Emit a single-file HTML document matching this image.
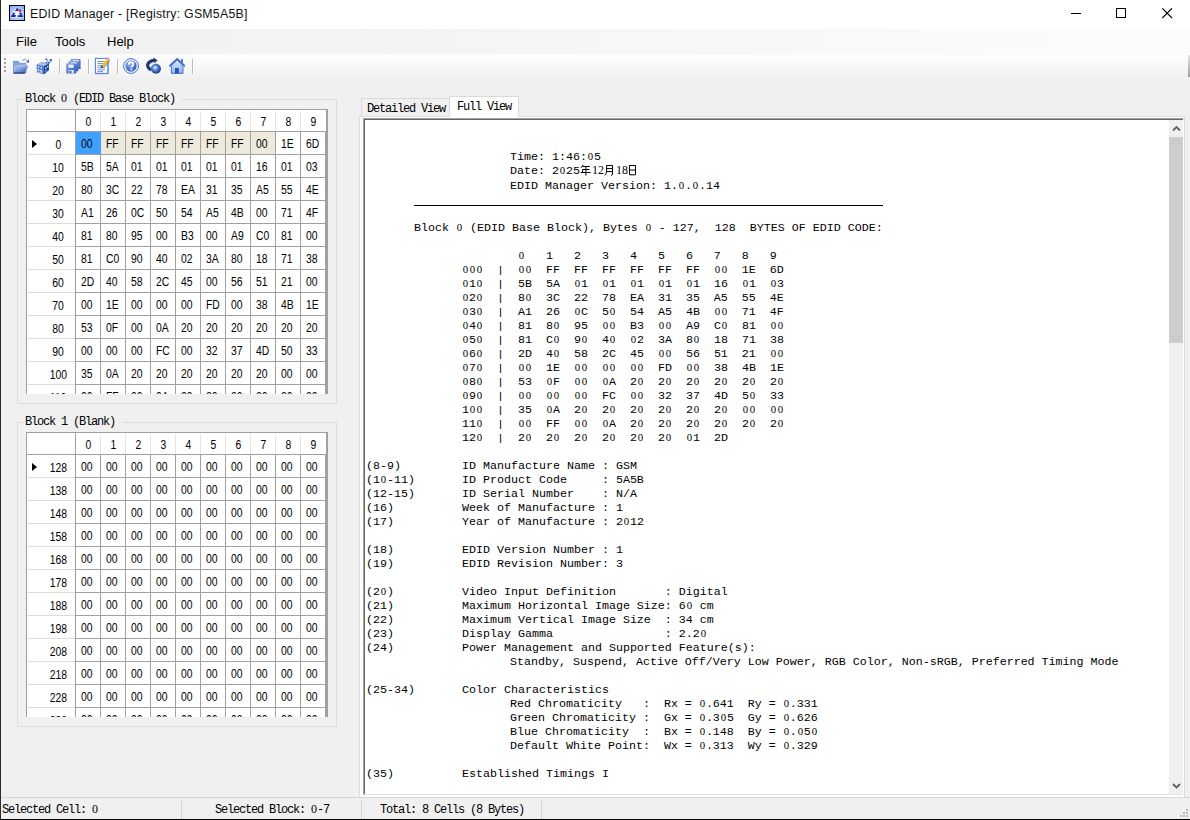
<!DOCTYPE html>
<html><head><meta charset="utf-8"><title>EDID Manager</title>
<style>
*{box-sizing:border-box;margin:0;padding:0}
html,body{width:1190px;height:820px;overflow:hidden;background:#f0f0f0;font-family:"Liberation Sans",sans-serif;color:#000}
#w{position:absolute;left:0;top:0;width:1190px;height:820px;overflow:hidden;background:#f0f0f0}
#w>*,.abs{position:absolute}
#title{left:0;top:0;width:1190px;height:29px;background:#fff}
#title .t{position:absolute;left:30px;top:6px;font-size:12.3px;letter-spacing:.25px;color:#111;line-height:16px;white-space:nowrap}
#menu{left:0;top:29px;width:1190px;height:25px;background:linear-gradient(90deg,#f0f0f0,#fcfcfc)}
#menu span{position:absolute;top:5px;font-size:13px;line-height:16px}
#tool{left:0;top:54px;width:1190px;height:25px;background:linear-gradient(180deg,#fdfdfd 0%,#f9f9f9 40%,#f0f0f0 100%)}
#tool .sep{position:absolute;top:5px;width:1px;height:15px;background:#bdbdbd}
#tool .sep:after{content:"";position:absolute;left:1px;top:1px;width:1px;height:15px;background:#fff}
#tool svg{position:absolute}
.gp{position:absolute;left:4px;width:2px;height:2px;background:#a0a0a0;box-shadow:1px 1px 0 #fff}
.ovf{position:absolute;left:1188px;top:1px;width:2px;height:22px;background:linear-gradient(#e8e8e8,#9a9a9a)}
.lb{position:absolute;left:0;top:0;width:1px;height:820px;background:#2b2b2b}
.bb{position:absolute;left:0;top:819px;width:1190px;height:1px;background:#000}
.gb{border:1px solid #dcdcdc}
.gbl{font-family:"Liberation Mono",monospace;font-size:12px;letter-spacing:-1.2px;line-height:14px;background:#f0f0f0;padding:0 2px 0 1px;white-space:nowrap}
.z{font-family:"Liberation Serif",serif;font-style:normal;letter-spacing:0;line-height:0}
.sim{font-family:"Liberation Mono",monospace;font-size:12px;letter-spacing:-1.2px;white-space:nowrap}
.grid{position:absolute;left:26px;width:302px;height:285px;overflow:hidden;background:#fff}
.gt{left:0;top:0;width:302px;height:1px;background:#a0a0a0}
.gl{left:0;top:0;width:1px;height:400px;background:#a0a0a0}
.grid>*{position:absolute}
.grid{font-size:12.5px}
.hd{top:2px;width:1px;height:20px;background:#e5e5e5}
.vl{width:1px;height:400px;background:#a0a0a0}
.hl{left:49px;width:252px;height:1px;background:#a0a0a0}
.rl{left:0;width:49px;height:1px;background:#dcdcdc}
.gr{left:300px;top:0;width:2px;height:400px;background:#a0a0a0}
.c{width:24px;height:22px;line-height:25px;text-align:center;font-weight:normal}
.c span,.rh span{display:inline-block;transform:scaleX(.83)}
.d{text-align:left;padding-left:4.5px}
.d span{transform-origin:left center}
.rh{left:14.5px;width:35px;height:22px;line-height:27px;text-align:center;font-weight:normal}
.sel{background:#40a0ff;width:25px!important}
.hi{background:#eeeadb}
.arrow{left:6px;width:0;height:0;border-left:5px solid #000;border-top:4.5px solid transparent;border-bottom:4.5px solid transparent}
.tab{border:1px solid #d9d9d9;border-bottom:none}
#panel{left:359px;top:116px;width:826px;height:682px;background:#fff;border:1px solid #dcdcdc}
#txt{left:363px;top:118px;width:821px;height:677px;background:#fff;border-left:1px solid #a0a0a0;border-top:1px solid #a0a0a0;border-bottom:1px solid #e3e3e3;border-right:1px solid #fff}
#txt .in{position:absolute;left:0;top:0;right:0;bottom:0;border-left:1px solid #696969;border-top:1px solid #696969;overflow:hidden}
#txtc{position:absolute;left:1px;top:2px;font-family:"Liberation Mono",monospace;font-size:11.667px;line-height:14px;white-space:pre}
.ln{position:absolute;white-space:pre}
.ln i{font-family:"Liberation Serif",serif;font-style:normal;font-size:10.8px;line-height:0;letter-spacing:1.6px;position:relative;left:.8px}
.cj{display:inline-block;width:12px;height:12px;vertical-align:-2px;fill:none;stroke:#000;stroke-width:1}
.ln b{font-weight:normal;display:inline-block;transform:scaleY(.76);transform-origin:50% 62%}
.ln u{text-decoration:none;font-family:"Liberation Serif",serif;font-size:12px;line-height:0}
#sb{left:1169px;top:120px;width:14px;height:674px;background:#f0f0f0}
#sb .th{position:absolute;left:0;top:17px;width:14px;height:206px;background:#cdcdcd}
#status .sp{position:absolute;top:2px;width:1px;height:19px;background:#d7d7d7}
#status{left:0;top:797px;width:1190px;height:22px;border-top:1px solid #d7d7d7;background:#f0f0f0}
#status span{position:absolute;top:5px;line-height:14px}
</style></head><body>
<div id="w">
<div id="title">
<svg class="abs" style="left:9px;top:5px" width="16" height="16" viewBox="0 0 16 16"><defs><radialGradient id="ig" cx="50%" cy="55%" r="60%"><stop offset="0" stop-color="#e8f1ff"/><stop offset="1" stop-color="#7fb0ff"/></radialGradient></defs><rect x=".5" y=".5" width="15" height="15" fill="url(#ig)" stroke="#000"/><path d="M8.1 2.2L1.4 12.4H14.8Z" fill="#fff" opacity=".75"/><path d="M8.1 2.6L6 6.3L9 6.1L9.9 4.9ZM1.8 11.9L4.3 7.7L6.5 8.3L4.9 9.8L7.2 10.2L6.2 11.9ZM14.2 11.9L11.7 7.1L10 8.5L11.5 10L8.4 10.6L8.8 11.9Z" fill="#27298c"/><circle cx="10.9" cy="5.7" r="1.35" fill="#f21a1a"/></svg>
<div class="t">EDID Manager - [Registry: GSM5A5B]</div>
<svg class="abs" style="left:1071px;top:8px" width="11" height="11" viewBox="0 0 11 11"><path d="M0 5.5H10" stroke="#000" stroke-width="1"/></svg>
<svg class="abs" style="left:1116px;top:8px" width="11" height="11" viewBox="0 0 11 11"><rect x=".5" y=".5" width="9" height="9" fill="none" stroke="#000" stroke-width="1"/></svg>
<svg class="abs" style="left:1162px;top:8px" width="11" height="11" viewBox="0 0 11 11"><path d="M.3 .3L10 10M10 .3L.3 10" stroke="#000" stroke-width="1.1"/></svg>
</div>
<div id="menu"><span style="left:16px">File</span><span style="left:55px">Tools</span><span style="left:107px">Help</span></div>
<div id="tool">
<svg width="0" height="0" style="position:absolute"><defs>
<linearGradient id="fb" x1="0" y1="0" x2="0" y2="1"><stop offset="0" stop-color="#7c9bdd"/><stop offset="1" stop-color="#c3d2f3"/></linearGradient>
<linearGradient id="ff" x1="0" y1="0" x2="1" y2="1"><stop offset="0" stop-color="#c4d3f5"/><stop offset=".5" stop-color="#7897de"/><stop offset="1" stop-color="#2f52aa"/></linearGradient>
<linearGradient id="fl" x1="0" y1="0" x2="1" y2="1"><stop offset="0" stop-color="#86a2e4"/><stop offset="1" stop-color="#3557b0"/></linearGradient>
<radialGradient id="hp" cx="35%" cy="30%" r="75%"><stop offset="0" stop-color="#8fb2f5"/><stop offset="1" stop-color="#2757bd"/></radialGradient>
<radialGradient id="sp" cx="42%" cy="40%" r="60%"><stop offset="0" stop-color="#eaf2ff"/><stop offset=".45" stop-color="#5a86dd"/><stop offset="1" stop-color="#16357f"/></radialGradient>
<linearGradient id="hm" x1="0" y1="0" x2="0" y2="1"><stop offset="0" stop-color="#dfeaff"/><stop offset="1" stop-color="#8eb0ee"/></linearGradient>
</defs></svg><i class="gp" style="top:4px"></i><i class="gp" style="top:8px"></i><i class="gp" style="top:12px"></i><i class="gp" style="top:16px"></i><svg style="left:13px;top:4px;width:17px;height:16px" viewBox="0 0 17 16"><path d="M0.5 3.4H5.6L6.6 5.4H13V15H0.5Z" fill="url(#fb)" stroke="#5a7ccb" stroke-width=".7"/><path d="M4.4 7.7H15.4L11.8 15.1H0.4Z" fill="url(#ff)"/><path d="M4.4 7.9H15.2" stroke="#c9d7f5" stroke-width=".6"/><path d="M0.4 15.1H11.8" stroke="#16306e" stroke-width="1.1"/><path d="M9.4 2.7Q11.6 0.4 14 2.5" fill="none" stroke="#4a72cc" stroke-width="1" stroke-dasharray="1.7 .6"/><path d="M16 1.6V4.8L13 4.1Z" fill="#2f58b8"/></svg><svg style="left:36px;top:4px;width:17px;height:17px" viewBox="0 0 17 17"><path d="M0.5 7L5.5 4.2L12.5 5L13 5.8V12L8 16.2L1 14.5Z" fill="#4b72cd"/><path d="M0.5 7L5.5 4.2L12.5 5.2L7.8 8.6Z" fill="#88a6ea"/><path d="M7.8 8.6L13 5.5V12L8 16.2Z" fill="#2849a4"/><path d="M1.6 8.2h1.7v1.6h-1.7zM4.4 8.9h1.7v1.6h-1.7zM1.6 11.1h1.7v1.6h-1.7zM4.4 11.8h1.7v1.6h-1.7zM3.6 5.4h1.6v1h-1.6zM6.6 6.2h1.6v1h-1.6zM9.3 5.5h1.6v.9h-1.6zM6 4.6h1.4v.7h-1.4zM9 9.4h1.3v1.5h-1.3zM11.2 8.1h1.1v1.5h-1.1zM9.4 12.3h1v1.3h-1zM1.6 13.8h5.2v.8h-5.2z" fill="#eef3ff" opacity=".92"/><path d="M8.8 1.3l1.5-1 1.5 1-1.5 1zM13.8 1h2v2.6h-2zM11.6 4.4l1.7-.9 1 1.3-1.5 1.2zM11.2 2.3h1.1v1.1h-1.1zM10.2 3.8l1.2.4-.6 1.2-1.1-.5z" fill="#3762cb"/></svg><i class="sep" style="left:59px"></i><svg style="left:66px;top:4px;width:15px;height:16px" viewBox="0 0 15 16"><g transform="translate(4.6 1)"><path d="M0 0H9.2L10 .8V10H0Z" fill="url(#fl)"/><rect x="2.2" y="1" width="6" height="1.6" fill="#dfe8fb"/></g><path d="M2 3.4H12.4V13.2H2Z" fill="#fff" opacity=".55"/><g transform="translate(2.4 3.2)"><path d="M0 0H9.2L10 .8V10H0Z" fill="url(#fl)"/><rect x="2.2" y="1" width="6" height="1.6" fill="#dfe8fb"/></g><path d="M0 5.4H10.2V15.2H0Z" fill="#fff" opacity=".0"/><g transform="translate(0.2 5.4)"><path d="M0 0H9.2L10 .8V10H0Z" fill="url(#fl)"/><rect x="2.2" y="1.2" width="5.2" height="3.2" fill="#eef3ff"/><rect x="2.4" y="6.6" width="5.2" height="3.4" fill="#dfe8fb"/><rect x="3.2" y="7.4" width="2" height="2.6" fill="#3d62bd"/></g></svg><i class="sep" style="left:88px"></i><svg style="left:94px;top:3px;width:17px;height:18px" viewBox="0 0 17 18"><path d="M2 16.8H14.4V4" fill="none" stroke="#9aa7c8" stroke-width="1"/><rect x="1.4" y="1.4" width="12.4" height="15" fill="#fff" stroke="#5d82d8" stroke-width="1.1"/><path d="M3.4 4.5H10.6M3.4 6.6H10.6M3.4 8.7H8.5M3.4 10.8H10.6M3.4 12.9H11M3.4 14.6H9" stroke="#5a80d6" stroke-width=".9"/><path d="M9.6 10.6L15.6 3.4" stroke="#7d7d7d" stroke-width="2" opacity=".6"/><path d="M8.3 9.2L14.6 1.9" stroke="#eab90c" stroke-width="2.6"/><path d="M8.9 8.2L14.9 1.4" stroke="#f8e27a" stroke-width=".8"/><path d="M14.2 .6L16.2 2.2L15.2 3.3L13.3 1.7Z" fill="#f38be6"/><path d="M6.9 10.9L7.3 8.5L9.2 10.1Z" fill="#111"/></svg><i class="sep" style="left:117px"></i><svg style="left:123px;top:4px;width:16px;height:16px" viewBox="0 0 16 16"><circle cx="8" cy="8" r="7.4" fill="#fff" stroke="#3f6fd6" stroke-width="1"/><circle cx="8" cy="8" r="5.7" fill="url(#hp)"/><path d="M5.9 6.6Q5.9 4.3 8.1 4.3Q10.3 4.3 10.3 6.2Q10.3 7.4 9.2 8Q8.4 8.5 8.4 9.6" fill="none" stroke="#fff" stroke-width="2"/><rect x="7.5" y="10.6" width="1.8" height="1.8" fill="#fff"/></svg><svg style="left:146px;top:4px;width:16px;height:16px" viewBox="0 0 16 16"><path d="M8.6 2.2Q3.2 3 1.6 6.6Q1.4 9.6 5 12" fill="none" stroke="#1f3b80" stroke-width="3.2"/><path d="M7.4 -.4L11.6 2.2L8.6 5.2Z" fill="#1f3b80"/><circle cx="9.9" cy="10.7" r="5" fill="url(#sp)"/></svg><svg style="left:169px;top:4px;width:16px;height:16px" viewBox="0 0 16 16"><rect x="12.2" y="1" width="1.6" height="5" fill="#3f66c4"/><path d="M2.4 7.6V15.4H14V7.6L8.2 2Z" fill="url(#hm)" stroke="#4a74d2" stroke-width="1"/><path d="M.4 8.3L8.2 .9L16 8.3" fill="none" stroke="#4a74d2" stroke-width="2"/><rect x="6" y="10" width="3.8" height="5.4" fill="#2c52ad"/></svg><i class="sep" style="left:192px"></i><i class="ovf"></i>
</div>
<div class="gb" style="left:17px;top:99px;width:320px;height:305px"></div>
<div class="gbl" style="left:24px;top:92px;width:158px">Block <i class="z">0</i> (EDID Base Block)</div>
<div class="grid" style="top:109px">
<i class="hd" style="left:74px"></i>
<i class="hd" style="left:99px"></i>
<i class="hd" style="left:124px"></i>
<i class="hd" style="left:149px"></i>
<i class="hd" style="left:174px"></i>
<i class="hd" style="left:199px"></i>
<i class="hd" style="left:224px"></i>
<i class="hd" style="left:249px"></i>
<i class="hd" style="left:274px"></i>
<i class="vl" style="left:49px;top:1px"></i>
<i class="vl" style="left:74px;top:22px"></i>
<i class="vl" style="left:99px;top:22px"></i>
<i class="vl" style="left:124px;top:22px"></i>
<i class="vl" style="left:149px;top:22px"></i>
<i class="vl" style="left:174px;top:22px"></i>
<i class="vl" style="left:199px;top:22px"></i>
<i class="vl" style="left:224px;top:22px"></i>
<i class="vl" style="left:249px;top:22px"></i>
<i class="vl" style="left:274px;top:22px"></i>
<i class="vl" style="left:299px;top:22px"></i>
<i class="hl" style="top:22px;left:0;width:302px"></i>
<i class="hl" style="top:45px"></i>
<i class="rl" style="top:45px"></i>
<i class="hl" style="top:68px"></i>
<i class="rl" style="top:68px"></i>
<i class="hl" style="top:91px"></i>
<i class="rl" style="top:91px"></i>
<i class="hl" style="top:114px"></i>
<i class="rl" style="top:114px"></i>
<i class="hl" style="top:137px"></i>
<i class="rl" style="top:137px"></i>
<i class="hl" style="top:160px"></i>
<i class="rl" style="top:160px"></i>
<i class="hl" style="top:183px"></i>
<i class="rl" style="top:183px"></i>
<i class="hl" style="top:206px"></i>
<i class="rl" style="top:206px"></i>
<i class="hl" style="top:229px"></i>
<i class="rl" style="top:229px"></i>
<i class="hl" style="top:252px"></i>
<i class="rl" style="top:252px"></i>
<i class="hl" style="top:275px"></i>
<i class="rl" style="top:275px"></i>
<i class="hl" style="top:298px"></i>
<i class="rl" style="top:298px"></i>
<div class="c" style="left:50px;top:1px;height:21px;line-height:24px"><span>0</span></div>
<div class="c" style="left:75px;top:1px;height:21px;line-height:24px"><span>1</span></div>
<div class="c" style="left:100px;top:1px;height:21px;line-height:24px"><span>2</span></div>
<div class="c" style="left:125px;top:1px;height:21px;line-height:24px"><span>3</span></div>
<div class="c" style="left:150px;top:1px;height:21px;line-height:24px"><span>4</span></div>
<div class="c" style="left:175px;top:1px;height:21px;line-height:24px"><span>5</span></div>
<div class="c" style="left:200px;top:1px;height:21px;line-height:24px"><span>6</span></div>
<div class="c" style="left:225px;top:1px;height:21px;line-height:24px"><span>7</span></div>
<div class="c" style="left:250px;top:1px;height:21px;line-height:24px"><span>8</span></div>
<div class="c" style="left:275px;top:1px;height:21px;line-height:24px"><span>9</span></div>
<div class="rh" style="top:23px"><span>0</span></div>
<div class="c d sel" style="left:50px;top:23px"><span>00</span></div>
<div class="c d hi" style="left:75px;top:23px"><span>FF</span></div>
<div class="c d hi" style="left:100px;top:23px"><span>FF</span></div>
<div class="c d hi" style="left:125px;top:23px"><span>FF</span></div>
<div class="c d hi" style="left:150px;top:23px"><span>FF</span></div>
<div class="c d hi" style="left:175px;top:23px"><span>FF</span></div>
<div class="c d hi" style="left:200px;top:23px"><span>FF</span></div>
<div class="c d hi" style="left:225px;top:23px"><span>00</span></div>
<div class="c d" style="left:250px;top:23px"><span>1E</span></div>
<div class="c d" style="left:275px;top:23px"><span>6D</span></div>
<div class="rh" style="top:46px"><span>10</span></div>
<div class="c d" style="left:50px;top:46px"><span>5B</span></div>
<div class="c d" style="left:75px;top:46px"><span>5A</span></div>
<div class="c d" style="left:100px;top:46px"><span>01</span></div>
<div class="c d" style="left:125px;top:46px"><span>01</span></div>
<div class="c d" style="left:150px;top:46px"><span>01</span></div>
<div class="c d" style="left:175px;top:46px"><span>01</span></div>
<div class="c d" style="left:200px;top:46px"><span>01</span></div>
<div class="c d" style="left:225px;top:46px"><span>16</span></div>
<div class="c d" style="left:250px;top:46px"><span>01</span></div>
<div class="c d" style="left:275px;top:46px"><span>03</span></div>
<div class="rh" style="top:69px"><span>20</span></div>
<div class="c d" style="left:50px;top:69px"><span>80</span></div>
<div class="c d" style="left:75px;top:69px"><span>3C</span></div>
<div class="c d" style="left:100px;top:69px"><span>22</span></div>
<div class="c d" style="left:125px;top:69px"><span>78</span></div>
<div class="c d" style="left:150px;top:69px"><span>EA</span></div>
<div class="c d" style="left:175px;top:69px"><span>31</span></div>
<div class="c d" style="left:200px;top:69px"><span>35</span></div>
<div class="c d" style="left:225px;top:69px"><span>A5</span></div>
<div class="c d" style="left:250px;top:69px"><span>55</span></div>
<div class="c d" style="left:275px;top:69px"><span>4E</span></div>
<div class="rh" style="top:92px"><span>30</span></div>
<div class="c d" style="left:50px;top:92px"><span>A1</span></div>
<div class="c d" style="left:75px;top:92px"><span>26</span></div>
<div class="c d" style="left:100px;top:92px"><span>0C</span></div>
<div class="c d" style="left:125px;top:92px"><span>50</span></div>
<div class="c d" style="left:150px;top:92px"><span>54</span></div>
<div class="c d" style="left:175px;top:92px"><span>A5</span></div>
<div class="c d" style="left:200px;top:92px"><span>4B</span></div>
<div class="c d" style="left:225px;top:92px"><span>00</span></div>
<div class="c d" style="left:250px;top:92px"><span>71</span></div>
<div class="c d" style="left:275px;top:92px"><span>4F</span></div>
<div class="rh" style="top:115px"><span>40</span></div>
<div class="c d" style="left:50px;top:115px"><span>81</span></div>
<div class="c d" style="left:75px;top:115px"><span>80</span></div>
<div class="c d" style="left:100px;top:115px"><span>95</span></div>
<div class="c d" style="left:125px;top:115px"><span>00</span></div>
<div class="c d" style="left:150px;top:115px"><span>B3</span></div>
<div class="c d" style="left:175px;top:115px"><span>00</span></div>
<div class="c d" style="left:200px;top:115px"><span>A9</span></div>
<div class="c d" style="left:225px;top:115px"><span>C0</span></div>
<div class="c d" style="left:250px;top:115px"><span>81</span></div>
<div class="c d" style="left:275px;top:115px"><span>00</span></div>
<div class="rh" style="top:138px"><span>50</span></div>
<div class="c d" style="left:50px;top:138px"><span>81</span></div>
<div class="c d" style="left:75px;top:138px"><span>C0</span></div>
<div class="c d" style="left:100px;top:138px"><span>90</span></div>
<div class="c d" style="left:125px;top:138px"><span>40</span></div>
<div class="c d" style="left:150px;top:138px"><span>02</span></div>
<div class="c d" style="left:175px;top:138px"><span>3A</span></div>
<div class="c d" style="left:200px;top:138px"><span>80</span></div>
<div class="c d" style="left:225px;top:138px"><span>18</span></div>
<div class="c d" style="left:250px;top:138px"><span>71</span></div>
<div class="c d" style="left:275px;top:138px"><span>38</span></div>
<div class="rh" style="top:161px"><span>60</span></div>
<div class="c d" style="left:50px;top:161px"><span>2D</span></div>
<div class="c d" style="left:75px;top:161px"><span>40</span></div>
<div class="c d" style="left:100px;top:161px"><span>58</span></div>
<div class="c d" style="left:125px;top:161px"><span>2C</span></div>
<div class="c d" style="left:150px;top:161px"><span>45</span></div>
<div class="c d" style="left:175px;top:161px"><span>00</span></div>
<div class="c d" style="left:200px;top:161px"><span>56</span></div>
<div class="c d" style="left:225px;top:161px"><span>51</span></div>
<div class="c d" style="left:250px;top:161px"><span>21</span></div>
<div class="c d" style="left:275px;top:161px"><span>00</span></div>
<div class="rh" style="top:184px"><span>70</span></div>
<div class="c d" style="left:50px;top:184px"><span>00</span></div>
<div class="c d" style="left:75px;top:184px"><span>1E</span></div>
<div class="c d" style="left:100px;top:184px"><span>00</span></div>
<div class="c d" style="left:125px;top:184px"><span>00</span></div>
<div class="c d" style="left:150px;top:184px"><span>00</span></div>
<div class="c d" style="left:175px;top:184px"><span>FD</span></div>
<div class="c d" style="left:200px;top:184px"><span>00</span></div>
<div class="c d" style="left:225px;top:184px"><span>38</span></div>
<div class="c d" style="left:250px;top:184px"><span>4B</span></div>
<div class="c d" style="left:275px;top:184px"><span>1E</span></div>
<div class="rh" style="top:207px"><span>80</span></div>
<div class="c d" style="left:50px;top:207px"><span>53</span></div>
<div class="c d" style="left:75px;top:207px"><span>0F</span></div>
<div class="c d" style="left:100px;top:207px"><span>00</span></div>
<div class="c d" style="left:125px;top:207px"><span>0A</span></div>
<div class="c d" style="left:150px;top:207px"><span>20</span></div>
<div class="c d" style="left:175px;top:207px"><span>20</span></div>
<div class="c d" style="left:200px;top:207px"><span>20</span></div>
<div class="c d" style="left:225px;top:207px"><span>20</span></div>
<div class="c d" style="left:250px;top:207px"><span>20</span></div>
<div class="c d" style="left:275px;top:207px"><span>20</span></div>
<div class="rh" style="top:230px"><span>90</span></div>
<div class="c d" style="left:50px;top:230px"><span>00</span></div>
<div class="c d" style="left:75px;top:230px"><span>00</span></div>
<div class="c d" style="left:100px;top:230px"><span>00</span></div>
<div class="c d" style="left:125px;top:230px"><span>FC</span></div>
<div class="c d" style="left:150px;top:230px"><span>00</span></div>
<div class="c d" style="left:175px;top:230px"><span>32</span></div>
<div class="c d" style="left:200px;top:230px"><span>37</span></div>
<div class="c d" style="left:225px;top:230px"><span>4D</span></div>
<div class="c d" style="left:250px;top:230px"><span>50</span></div>
<div class="c d" style="left:275px;top:230px"><span>33</span></div>
<div class="rh" style="top:253px"><span>100</span></div>
<div class="c d" style="left:50px;top:253px"><span>35</span></div>
<div class="c d" style="left:75px;top:253px"><span>0A</span></div>
<div class="c d" style="left:100px;top:253px"><span>20</span></div>
<div class="c d" style="left:125px;top:253px"><span>20</span></div>
<div class="c d" style="left:150px;top:253px"><span>20</span></div>
<div class="c d" style="left:175px;top:253px"><span>20</span></div>
<div class="c d" style="left:200px;top:253px"><span>20</span></div>
<div class="c d" style="left:225px;top:253px"><span>20</span></div>
<div class="c d" style="left:250px;top:253px"><span>00</span></div>
<div class="c d" style="left:275px;top:253px"><span>00</span></div>
<div class="rh" style="top:276px"><span>110</span></div>
<div class="c d" style="left:50px;top:276px"><span>00</span></div>
<div class="c d" style="left:75px;top:276px"><span>FF</span></div>
<div class="c d" style="left:100px;top:276px"><span>00</span></div>
<div class="c d" style="left:125px;top:276px"><span>0A</span></div>
<div class="c d" style="left:150px;top:276px"><span>20</span></div>
<div class="c d" style="left:175px;top:276px"><span>20</span></div>
<div class="c d" style="left:200px;top:276px"><span>20</span></div>
<div class="c d" style="left:225px;top:276px"><span>20</span></div>
<div class="c d" style="left:250px;top:276px"><span>20</span></div>
<div class="c d" style="left:275px;top:276px"><span>20</span></div>
<i class="arrow" style="top:31px"></i>
<i class="gr"></i><i class="gt"></i><i class="gl"></i>
</div>
<div class="gb" style="left:17px;top:422px;width:320px;height:305px"></div>
<div class="gbl" style="left:24px;top:415px;width:98px">Block 1 (Blank)</div>
<div class="grid" style="top:432px">
<i class="hd" style="left:74px"></i>
<i class="hd" style="left:99px"></i>
<i class="hd" style="left:124px"></i>
<i class="hd" style="left:149px"></i>
<i class="hd" style="left:174px"></i>
<i class="hd" style="left:199px"></i>
<i class="hd" style="left:224px"></i>
<i class="hd" style="left:249px"></i>
<i class="hd" style="left:274px"></i>
<i class="vl" style="left:49px;top:1px"></i>
<i class="vl" style="left:74px;top:22px"></i>
<i class="vl" style="left:99px;top:22px"></i>
<i class="vl" style="left:124px;top:22px"></i>
<i class="vl" style="left:149px;top:22px"></i>
<i class="vl" style="left:174px;top:22px"></i>
<i class="vl" style="left:199px;top:22px"></i>
<i class="vl" style="left:224px;top:22px"></i>
<i class="vl" style="left:249px;top:22px"></i>
<i class="vl" style="left:274px;top:22px"></i>
<i class="vl" style="left:299px;top:22px"></i>
<i class="hl" style="top:22px;left:0;width:302px"></i>
<i class="hl" style="top:45px"></i>
<i class="rl" style="top:45px"></i>
<i class="hl" style="top:68px"></i>
<i class="rl" style="top:68px"></i>
<i class="hl" style="top:91px"></i>
<i class="rl" style="top:91px"></i>
<i class="hl" style="top:114px"></i>
<i class="rl" style="top:114px"></i>
<i class="hl" style="top:137px"></i>
<i class="rl" style="top:137px"></i>
<i class="hl" style="top:160px"></i>
<i class="rl" style="top:160px"></i>
<i class="hl" style="top:183px"></i>
<i class="rl" style="top:183px"></i>
<i class="hl" style="top:206px"></i>
<i class="rl" style="top:206px"></i>
<i class="hl" style="top:229px"></i>
<i class="rl" style="top:229px"></i>
<i class="hl" style="top:252px"></i>
<i class="rl" style="top:252px"></i>
<i class="hl" style="top:275px"></i>
<i class="rl" style="top:275px"></i>
<i class="hl" style="top:298px"></i>
<i class="rl" style="top:298px"></i>
<div class="c" style="left:50px;top:1px;height:21px;line-height:24px"><span>0</span></div>
<div class="c" style="left:75px;top:1px;height:21px;line-height:24px"><span>1</span></div>
<div class="c" style="left:100px;top:1px;height:21px;line-height:24px"><span>2</span></div>
<div class="c" style="left:125px;top:1px;height:21px;line-height:24px"><span>3</span></div>
<div class="c" style="left:150px;top:1px;height:21px;line-height:24px"><span>4</span></div>
<div class="c" style="left:175px;top:1px;height:21px;line-height:24px"><span>5</span></div>
<div class="c" style="left:200px;top:1px;height:21px;line-height:24px"><span>6</span></div>
<div class="c" style="left:225px;top:1px;height:21px;line-height:24px"><span>7</span></div>
<div class="c" style="left:250px;top:1px;height:21px;line-height:24px"><span>8</span></div>
<div class="c" style="left:275px;top:1px;height:21px;line-height:24px"><span>9</span></div>
<div class="rh" style="top:23px"><span>128</span></div>
<div class="c d" style="left:50px;top:23px"><span>00</span></div>
<div class="c d" style="left:75px;top:23px"><span>00</span></div>
<div class="c d" style="left:100px;top:23px"><span>00</span></div>
<div class="c d" style="left:125px;top:23px"><span>00</span></div>
<div class="c d" style="left:150px;top:23px"><span>00</span></div>
<div class="c d" style="left:175px;top:23px"><span>00</span></div>
<div class="c d" style="left:200px;top:23px"><span>00</span></div>
<div class="c d" style="left:225px;top:23px"><span>00</span></div>
<div class="c d" style="left:250px;top:23px"><span>00</span></div>
<div class="c d" style="left:275px;top:23px"><span>00</span></div>
<div class="rh" style="top:46px"><span>138</span></div>
<div class="c d" style="left:50px;top:46px"><span>00</span></div>
<div class="c d" style="left:75px;top:46px"><span>00</span></div>
<div class="c d" style="left:100px;top:46px"><span>00</span></div>
<div class="c d" style="left:125px;top:46px"><span>00</span></div>
<div class="c d" style="left:150px;top:46px"><span>00</span></div>
<div class="c d" style="left:175px;top:46px"><span>00</span></div>
<div class="c d" style="left:200px;top:46px"><span>00</span></div>
<div class="c d" style="left:225px;top:46px"><span>00</span></div>
<div class="c d" style="left:250px;top:46px"><span>00</span></div>
<div class="c d" style="left:275px;top:46px"><span>00</span></div>
<div class="rh" style="top:69px"><span>148</span></div>
<div class="c d" style="left:50px;top:69px"><span>00</span></div>
<div class="c d" style="left:75px;top:69px"><span>00</span></div>
<div class="c d" style="left:100px;top:69px"><span>00</span></div>
<div class="c d" style="left:125px;top:69px"><span>00</span></div>
<div class="c d" style="left:150px;top:69px"><span>00</span></div>
<div class="c d" style="left:175px;top:69px"><span>00</span></div>
<div class="c d" style="left:200px;top:69px"><span>00</span></div>
<div class="c d" style="left:225px;top:69px"><span>00</span></div>
<div class="c d" style="left:250px;top:69px"><span>00</span></div>
<div class="c d" style="left:275px;top:69px"><span>00</span></div>
<div class="rh" style="top:92px"><span>158</span></div>
<div class="c d" style="left:50px;top:92px"><span>00</span></div>
<div class="c d" style="left:75px;top:92px"><span>00</span></div>
<div class="c d" style="left:100px;top:92px"><span>00</span></div>
<div class="c d" style="left:125px;top:92px"><span>00</span></div>
<div class="c d" style="left:150px;top:92px"><span>00</span></div>
<div class="c d" style="left:175px;top:92px"><span>00</span></div>
<div class="c d" style="left:200px;top:92px"><span>00</span></div>
<div class="c d" style="left:225px;top:92px"><span>00</span></div>
<div class="c d" style="left:250px;top:92px"><span>00</span></div>
<div class="c d" style="left:275px;top:92px"><span>00</span></div>
<div class="rh" style="top:115px"><span>168</span></div>
<div class="c d" style="left:50px;top:115px"><span>00</span></div>
<div class="c d" style="left:75px;top:115px"><span>00</span></div>
<div class="c d" style="left:100px;top:115px"><span>00</span></div>
<div class="c d" style="left:125px;top:115px"><span>00</span></div>
<div class="c d" style="left:150px;top:115px"><span>00</span></div>
<div class="c d" style="left:175px;top:115px"><span>00</span></div>
<div class="c d" style="left:200px;top:115px"><span>00</span></div>
<div class="c d" style="left:225px;top:115px"><span>00</span></div>
<div class="c d" style="left:250px;top:115px"><span>00</span></div>
<div class="c d" style="left:275px;top:115px"><span>00</span></div>
<div class="rh" style="top:138px"><span>178</span></div>
<div class="c d" style="left:50px;top:138px"><span>00</span></div>
<div class="c d" style="left:75px;top:138px"><span>00</span></div>
<div class="c d" style="left:100px;top:138px"><span>00</span></div>
<div class="c d" style="left:125px;top:138px"><span>00</span></div>
<div class="c d" style="left:150px;top:138px"><span>00</span></div>
<div class="c d" style="left:175px;top:138px"><span>00</span></div>
<div class="c d" style="left:200px;top:138px"><span>00</span></div>
<div class="c d" style="left:225px;top:138px"><span>00</span></div>
<div class="c d" style="left:250px;top:138px"><span>00</span></div>
<div class="c d" style="left:275px;top:138px"><span>00</span></div>
<div class="rh" style="top:161px"><span>188</span></div>
<div class="c d" style="left:50px;top:161px"><span>00</span></div>
<div class="c d" style="left:75px;top:161px"><span>00</span></div>
<div class="c d" style="left:100px;top:161px"><span>00</span></div>
<div class="c d" style="left:125px;top:161px"><span>00</span></div>
<div class="c d" style="left:150px;top:161px"><span>00</span></div>
<div class="c d" style="left:175px;top:161px"><span>00</span></div>
<div class="c d" style="left:200px;top:161px"><span>00</span></div>
<div class="c d" style="left:225px;top:161px"><span>00</span></div>
<div class="c d" style="left:250px;top:161px"><span>00</span></div>
<div class="c d" style="left:275px;top:161px"><span>00</span></div>
<div class="rh" style="top:184px"><span>198</span></div>
<div class="c d" style="left:50px;top:184px"><span>00</span></div>
<div class="c d" style="left:75px;top:184px"><span>00</span></div>
<div class="c d" style="left:100px;top:184px"><span>00</span></div>
<div class="c d" style="left:125px;top:184px"><span>00</span></div>
<div class="c d" style="left:150px;top:184px"><span>00</span></div>
<div class="c d" style="left:175px;top:184px"><span>00</span></div>
<div class="c d" style="left:200px;top:184px"><span>00</span></div>
<div class="c d" style="left:225px;top:184px"><span>00</span></div>
<div class="c d" style="left:250px;top:184px"><span>00</span></div>
<div class="c d" style="left:275px;top:184px"><span>00</span></div>
<div class="rh" style="top:207px"><span>208</span></div>
<div class="c d" style="left:50px;top:207px"><span>00</span></div>
<div class="c d" style="left:75px;top:207px"><span>00</span></div>
<div class="c d" style="left:100px;top:207px"><span>00</span></div>
<div class="c d" style="left:125px;top:207px"><span>00</span></div>
<div class="c d" style="left:150px;top:207px"><span>00</span></div>
<div class="c d" style="left:175px;top:207px"><span>00</span></div>
<div class="c d" style="left:200px;top:207px"><span>00</span></div>
<div class="c d" style="left:225px;top:207px"><span>00</span></div>
<div class="c d" style="left:250px;top:207px"><span>00</span></div>
<div class="c d" style="left:275px;top:207px"><span>00</span></div>
<div class="rh" style="top:230px"><span>218</span></div>
<div class="c d" style="left:50px;top:230px"><span>00</span></div>
<div class="c d" style="left:75px;top:230px"><span>00</span></div>
<div class="c d" style="left:100px;top:230px"><span>00</span></div>
<div class="c d" style="left:125px;top:230px"><span>00</span></div>
<div class="c d" style="left:150px;top:230px"><span>00</span></div>
<div class="c d" style="left:175px;top:230px"><span>00</span></div>
<div class="c d" style="left:200px;top:230px"><span>00</span></div>
<div class="c d" style="left:225px;top:230px"><span>00</span></div>
<div class="c d" style="left:250px;top:230px"><span>00</span></div>
<div class="c d" style="left:275px;top:230px"><span>00</span></div>
<div class="rh" style="top:253px"><span>228</span></div>
<div class="c d" style="left:50px;top:253px"><span>00</span></div>
<div class="c d" style="left:75px;top:253px"><span>00</span></div>
<div class="c d" style="left:100px;top:253px"><span>00</span></div>
<div class="c d" style="left:125px;top:253px"><span>00</span></div>
<div class="c d" style="left:150px;top:253px"><span>00</span></div>
<div class="c d" style="left:175px;top:253px"><span>00</span></div>
<div class="c d" style="left:200px;top:253px"><span>00</span></div>
<div class="c d" style="left:225px;top:253px"><span>00</span></div>
<div class="c d" style="left:250px;top:253px"><span>00</span></div>
<div class="c d" style="left:275px;top:253px"><span>00</span></div>
<div class="rh" style="top:276px"><span>238</span></div>
<div class="c d" style="left:50px;top:276px"><span>00</span></div>
<div class="c d" style="left:75px;top:276px"><span>00</span></div>
<div class="c d" style="left:100px;top:276px"><span>00</span></div>
<div class="c d" style="left:125px;top:276px"><span>00</span></div>
<div class="c d" style="left:150px;top:276px"><span>00</span></div>
<div class="c d" style="left:175px;top:276px"><span>00</span></div>
<div class="c d" style="left:200px;top:276px"><span>00</span></div>
<div class="c d" style="left:225px;top:276px"><span>00</span></div>
<div class="c d" style="left:250px;top:276px"><span>00</span></div>
<div class="c d" style="left:275px;top:276px"><span>00</span></div>
<i class="arrow" style="top:31px"></i>
<i class="gr"></i><i class="gt"></i><i class="gl"></i>
</div>
<div class="tab sim" style="left:361px;top:98px;width:89px;height:19px;background:#f0f0f0;line-height:21px;padding-left:5px">Detailed View</div>
<div id="panel"></div>
<div class="tab sim" style="left:449px;top:96px;width:70px;height:21px;background:#fff;line-height:21px;padding-left:7px">Full View</div>
<div id="txt"><div class="in"><div id="txtc">


<span class="ln" style="left:144px;top:28px">Time: 1:46:<i>0</i>5</span>
<span class="ln" style="left:144px;top:42px">Date: 2<i>0</i>25<svg class="cj" viewBox="0 0 12 12"><path d="M3.2 .8L1.2 3.8M2.6 2.5H9.8M2.6 5.5H9.4M.6 8.5H10.6M5.9 2.5V11.6M2.6 5.5V8.5"/></svg><u>12</u><svg class="cj" viewBox="0 0 12 12"><path d="M2.6 1.5H8.5V10.4Q8.5 11.3 7 11.1M2.6 1.5V6.8Q2.6 9.8 .8 11.3M2.6 4.6H8.5M2.6 7.6H8.5"/></svg><u>18</u><svg class="cj" viewBox="0 0 12 12"><path d="M1.5 1.5H7.5V10.8H1.5ZM1.5 6H7.5"/></svg></span>
<span class="ln" style="left:144px;top:57px">EDID Manager Version: 1.<i>0</i>.<i>0</i>.14</span>
<span class="ln" style="left:48px;top:83px;width:469px;height:1px;background:#000"></span>

<span class="ln" style="left:48px;top:99px">Block <i>0</i> (EDID Base Block), Bytes <i>0</i> - 127,  128  BYTES OF EDID CODE:</span>

<span class="ln" style="left:152px;top:127px"><i>0</i>   1   2   3   4   5   6   7   8   9</span>
<span class="ln" style="left:96px;top:141px"><i>0</i><i>0</i><i>0</i>  <b>|</b>  <i>0</i><i>0</i>  FF  FF  FF  FF  FF  FF  <i>0</i><i>0</i>  1E  6D</span>
<span class="ln" style="left:96px;top:155px"><i>0</i>1<i>0</i>  <b>|</b>  5B  5A  <i>0</i>1  <i>0</i>1  <i>0</i>1  <i>0</i>1  <i>0</i>1  16  <i>0</i>1  <i>0</i>3</span>
<span class="ln" style="left:96px;top:169px"><i>0</i>2<i>0</i>  <b>|</b>  8<i>0</i>  3C  22  78  EA  31  35  A5  55  4E</span>
<span class="ln" style="left:96px;top:183px"><i>0</i>3<i>0</i>  <b>|</b>  A1  26  <i>0</i>C  5<i>0</i>  54  A5  4B  <i>0</i><i>0</i>  71  4F</span>
<span class="ln" style="left:96px;top:197px"><i>0</i>4<i>0</i>  <b>|</b>  81  8<i>0</i>  95  <i>0</i><i>0</i>  B3  <i>0</i><i>0</i>  A9  C<i>0</i>  81  <i>0</i><i>0</i></span>
<span class="ln" style="left:96px;top:211px"><i>0</i>5<i>0</i>  <b>|</b>  81  C<i>0</i>  9<i>0</i>  4<i>0</i>  <i>0</i>2  3A  8<i>0</i>  18  71  38</span>
<span class="ln" style="left:96px;top:225px"><i>0</i>6<i>0</i>  <b>|</b>  2D  4<i>0</i>  58  2C  45  <i>0</i><i>0</i>  56  51  21  <i>0</i><i>0</i></span>
<span class="ln" style="left:96px;top:239px"><i>0</i>7<i>0</i>  <b>|</b>  <i>0</i><i>0</i>  1E  <i>0</i><i>0</i>  <i>0</i><i>0</i>  <i>0</i><i>0</i>  FD  <i>0</i><i>0</i>  38  4B  1E</span>
<span class="ln" style="left:96px;top:253px"><i>0</i>8<i>0</i>  <b>|</b>  53  <i>0</i>F  <i>0</i><i>0</i>  <i>0</i>A  2<i>0</i>  2<i>0</i>  2<i>0</i>  2<i>0</i>  2<i>0</i>  2<i>0</i></span>
<span class="ln" style="left:96px;top:267px"><i>0</i>9<i>0</i>  <b>|</b>  <i>0</i><i>0</i>  <i>0</i><i>0</i>  <i>0</i><i>0</i>  FC  <i>0</i><i>0</i>  32  37  4D  5<i>0</i>  33</span>
<span class="ln" style="left:96px;top:281px">1<i>0</i><i>0</i>  <b>|</b>  35  <i>0</i>A  2<i>0</i>  2<i>0</i>  2<i>0</i>  2<i>0</i>  2<i>0</i>  2<i>0</i>  <i>0</i><i>0</i>  <i>0</i><i>0</i></span>
<span class="ln" style="left:96px;top:295px">11<i>0</i>  <b>|</b>  <i>0</i><i>0</i>  FF  <i>0</i><i>0</i>  <i>0</i>A  2<i>0</i>  2<i>0</i>  2<i>0</i>  2<i>0</i>  2<i>0</i>  2<i>0</i></span>
<span class="ln" style="left:96px;top:309px">12<i>0</i>  <b>|</b>  2<i>0</i>  2<i>0</i>  2<i>0</i>  2<i>0</i>  2<i>0</i>  2<i>0</i>  <i>0</i>1  2D</span>

<span class="ln" style="left:0px;top:337px">(8-9)</span><span class="ln" style="left:96px;top:337px">ID Manufacture Name : GSM</span>
<span class="ln" style="left:0px;top:351px">(1<i>0</i>-11)</span><span class="ln" style="left:96px;top:351px">ID Product Code     : 5A5B</span>
<span class="ln" style="left:0px;top:365px">(12-15)</span><span class="ln" style="left:96px;top:365px">ID Serial Number    : N/A</span>
<span class="ln" style="left:0px;top:379px">(16)</span><span class="ln" style="left:96px;top:379px">Week of Manufacture : 1</span>
<span class="ln" style="left:0px;top:393px">(17)</span><span class="ln" style="left:96px;top:393px">Year of Manufacture : 2<i>0</i>12</span>

<span class="ln" style="left:0px;top:421px">(18)</span><span class="ln" style="left:96px;top:421px">EDID Version Number : 1</span>
<span class="ln" style="left:0px;top:435px">(19)</span><span class="ln" style="left:96px;top:435px">EDID Revision Number: 3</span>

<span class="ln" style="left:0px;top:463px">(2<i>0</i>)</span><span class="ln" style="left:96px;top:463px">Video Input Definition       : Digital</span>
<span class="ln" style="left:0px;top:477px">(21)</span><span class="ln" style="left:96px;top:477px">Maximum Horizontal Image Size: 6<i>0</i> cm</span>
<span class="ln" style="left:0px;top:491px">(22)</span><span class="ln" style="left:96px;top:491px">Maximum Vertical Image Size  : 34 cm</span>
<span class="ln" style="left:0px;top:505px">(23)</span><span class="ln" style="left:96px;top:505px">Display Gamma                : 2.2<i>0</i></span>
<span class="ln" style="left:0px;top:519px">(24)</span><span class="ln" style="left:96px;top:519px">Power Management and Supported Feature(s):</span>
<span class="ln" style="left:144px;top:533px">Standby, Suspend, Active Off/Very Low Power, RGB Color, Non-sRGB, Preferred Timing Mode</span>

<span class="ln" style="left:0px;top:561px">(25-34)</span><span class="ln" style="left:96px;top:561px">Color Characteristics</span>
<span class="ln" style="left:144px;top:575px">Red Chromaticity   :  Rx = <i>0</i>.641  Ry = <i>0</i>.331</span>
<span class="ln" style="left:144px;top:589px">Green Chromaticity :  Gx = <i>0</i>.3<i>0</i>5  Gy = <i>0</i>.626</span>
<span class="ln" style="left:144px;top:603px">Blue Chromaticity  :  Bx = <i>0</i>.148  By = <i>0</i>.<i>0</i>5<i>0</i></span>
<span class="ln" style="left:144px;top:617px">Default White Point:  Wx = <i>0</i>.313  Wy = <i>0</i>.329</span>

<span class="ln" style="left:0px;top:645px">(35)</span><span class="ln" style="left:96px;top:645px">Established Timings I</span>
</div></div></div>
<div id="sb"><div class="th"></div>
<svg class="abs" style="left:3px;top:5px" width="9" height="8" viewBox="0 0 9 8"><path d="M1 5.5L4.5 2L8 5.5" fill="none" stroke="#606060" stroke-width="1.8"/></svg>
<svg class="abs" style="left:3px;top:662px" width="9" height="8" viewBox="0 0 9 8"><path d="M1 2L4.5 5.5L8 2" fill="none" stroke="#606060" stroke-width="1.8"/></svg>
</div>
<div id="status" class="sim">
<span style="left:2px">Selected Cell: <i class="z">0</i></span><i class="sp" style="left:181px"></i>
<span style="left:215px">Selected Block: <i class="z">0</i>-7</span><i class="sp" style="left:361px"></i>
<span style="left:380px">Total: 8 Cells (8 Bytes)</span><i class="sp" style="left:541px"></i>
<svg class="abs" style="left:1179px;top:10px" width="10" height="10" viewBox="0 0 10 10" fill="#bfbfbf"><rect x="7" y="1" width="2" height="2"/><rect x="4" y="4" width="2" height="2"/><rect x="7" y="4" width="2" height="2"/><rect x="1" y="7" width="2" height="2"/><rect x="4" y="7" width="2" height="2"/><rect x="7" y="7" width="2" height="2"/></svg>
</div>
<div class="lb"></div><div class="bb"></div>
</div>
</body></html>
